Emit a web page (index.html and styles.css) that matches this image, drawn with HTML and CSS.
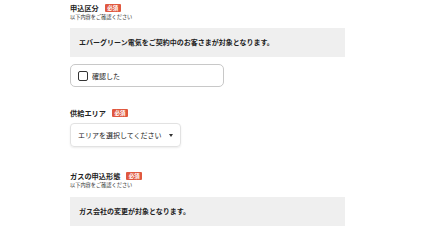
FILE: index.html
```html
<!DOCTYPE html>
<html lang="ja">
<head>
  <meta charset="UTF-8" />
  <title>お申込み</title>
  <link rel="stylesheet" href="styles.css">
</head>
<body>
  <div class="form">

    <!-- 申込区分 -->
    <div class="field">
      <div class="label">申込区分 <span class="badge">必須</span></div>
      <div class="note">以下内容をご確認ください</div>
      <div class="info">エバーグリーン電気をご契約中のお客さまが対象となります。</div>
      <label class="check">
        <span class="box"></span>
        <span>確認した</span>
      </label>
    </div>

    <!-- 供給エリア -->
    <div class="field field-area">
      <div class="label">供給エリア <span class="badge">必須</span></div>
      <div class="select">
        <span>エリアを選択してください</span>
        <span class="arrow"></span>
      </div>
    </div>

    <!-- ガスの申込形態 -->
    <div class="field field-gas">
      <div class="label">ガスの申込形態 <span class="badge">必須</span></div>
      <div class="note">以下内容をご確認ください</div>
      <div class="info">ガス会社の変更が対象となります。</div>
    </div>

  </div>
</body>
</html>
```

FILE: styles.css
```css
* {
  box-sizing: border-box;
}

body {
  margin: 0;
  background: #fff;
  color: #222;
  font-family: "Noto Sans CJK JP", "Noto Sans", sans-serif;
}

.form {
  padding: 3px 0 0 70px;
  width: 345px;
}

.label {
  font-size: 7.2px;
  font-weight: bold;
  line-height: 10px;
  display: flex;
  align-items: center;
  gap: 6px;
}

.badge {
  display: inline-block;
  background: #e0583f;
  color: #fff;
  font-size: 5.5px;
  line-height: 8px;
  padding: 0 2.5px;
  border-radius: 1px;
}

.note {
  font-size: 5.2px;
  line-height: 8px;
  color: #333;
}

.info {
  margin-top: 7px;
  background: #efefef;
  font-size: 7px;
  font-weight: bold;
  line-height: 9px;
  padding: 10px 9px;
}

.check {
  margin-top: 7px;
  width: 154px;
  height: 23px;
  border: 1px solid #c8c8c8;
  border-radius: 5px;
  display: flex;
  align-items: center;
  gap: 4px;
  padding-left: 7px;
  font-size: 7px;
}

.check .box {
  width: 10px;
  height: 10px;
  border: 1.2px solid #333;
  border-radius: 2px;
}

.field-area {
  margin-top: 21px;
}

.select {
  margin-top: 5px;
  width: 111px;
  height: 24px;
  border: 1px solid #e2e2e2;
  border-radius: 4px;
  box-shadow: 0 1px 2px rgba(0, 0, 0, 0.08);
  display: flex;
  align-items: center;
  justify-content: space-between;
  padding: 0 7px 0 7px;
  font-size: 7px;
}

.arrow {
  width: 0;
  height: 0;
  border-left: 2.5px solid transparent;
  border-right: 2.5px solid transparent;
  border-top: 3px solid #333;
}

.field-gas {
  margin-top: 24px;
}

.field-gas .info {
  margin-top: 8px;
}
```
